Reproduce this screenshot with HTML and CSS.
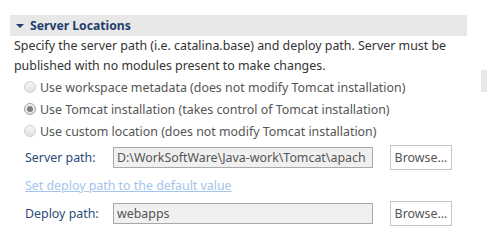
FILE: index.html
```html
<!DOCTYPE html>
<html lang="en">

<head>
    <meta charset="UTF-8" />
    <title>Server Locations</title>
    <link rel="stylesheet" href="styles.css">
</head>

<body>
    <div class="section">
        <div class="section-header">
            <span class="twisty"></span>
            <span class="section-title">Server Locations</span>
        </div>

        <p class="section-desc">
            Specify the server path (i.e. catalina.base) and deploy path. Server must be<br>
            published with no modules present to make changes.
        </p>

        <div class="radio-list">
            <div class="radio-row">
                <span class="radio"></span>
                <span>Use workspace metadata (does not modify Tomcat installation)</span>
            </div>
            <div class="radio-row">
                <span class="radio checked"></span>
                <span>Use Tomcat installation (takes control of Tomcat installation)</span>
            </div>
            <div class="radio-row">
                <span class="radio"></span>
                <span>Use custom location (does not modify Tomcat installation)</span>
            </div>
        </div>

        <div class="path-row">
            <span class="path-label">Server path:</span>
            <div class="path-input">D:\WorkSoftWare\Java-work\Tomcat\apach</div>
            <button class="browse-btn">Browse...</button>
        </div>

        <div class="link-row">
            <a class="default-link">Set deploy path to the default value</a>
        </div>

        <div class="path-row">
            <span class="path-label">Deploy path:</span>
            <div class="path-input">webapps</div>
            <button class="browse-btn">Browse...</button>
        </div>
    </div>

    <div class="scroll-thumb"></div>
</body>

</html>
```

FILE: styles.css
```css
* {
    box-sizing: border-box;
}

body {
    margin: 0;
    font-family: "Noto Sans", "Open Sans", sans-serif;
    font-size: 12.4px;
    background-color: #fff;
    color: #333;
}

.section {
    width: 457px;
    margin: 15px 0 0 10px;
}

.section-header {
    height: 21px;
    background-color: #e8e8e8;
    display: flex;
    align-items: center;
    padding-left: 6px;
}

.twisty {
    width: 0;
    height: 0;
    border-left: 4px solid transparent;
    border-right: 4px solid transparent;
    border-top: 4px solid #1f3e6b;
    margin-right: 6px;
}

.section-title {
    font-weight: bold;
    font-size: 12.2px;
    color: #1f3e6b;
}

.section-desc {
    margin: 0;
    padding: 0 4px;
    line-height: 20px;
    white-space: nowrap;
}

.radio-list {
    padding-left: 14px;
    color: #555;
}

.radio-row {
    height: 22px;
    display: flex;
    align-items: center;
}

.radio {
    width: 12px;
    height: 12px;
    border-radius: 50%;
    border: 1px solid #cfcfcf;
    background: linear-gradient(#f6f6f6, #e2e2e2);
    margin-right: 4px;
    display: flex;
    align-items: center;
    justify-content: center;
}

.radio.checked {
    border-color: #a0a0a0;
}

.radio.checked::after {
    content: "";
    width: 6px;
    height: 6px;
    border-radius: 50%;
    background-color: #808080;
}

.path-row {
    display: flex;
    align-items: center;
    padding-left: 15px;
    height: 25px;
    margin-top: 3px;
}

.path-label {
    width: 88px;
    color: #2d4b78;
}

.path-input {
    width: 260px;
    height: 21px;
    border: 1px solid #a9a9a9;
    background-color: #f0f0f0;
    color: #555;
    padding: 0 3px;
    line-height: 19px;
    white-space: nowrap;
    overflow: hidden;
}

.browse-btn {
    margin-left: 17px;
    width: 62px;
    height: 25px;
    border: 1px solid #c6c6c6;
    background-color: #fff;
    color: #555;
    font-family: inherit;
    font-size: 12.4px;
    padding: 0;
}

.link-row {
    padding-left: 15px;
    height: 20px;
    line-height: 20px;
    margin-top: 6px;
}

.default-link {
    color: #a4c4ec;
    text-decoration: underline;
}

.link-row + .path-row {
    margin-top: 5px;
}

.scroll-thumb {
    position: absolute;
    left: 481px;
    top: 70px;
    width: 6px;
    height: 22px;
    background-color: #e8e8e8;
}
```
